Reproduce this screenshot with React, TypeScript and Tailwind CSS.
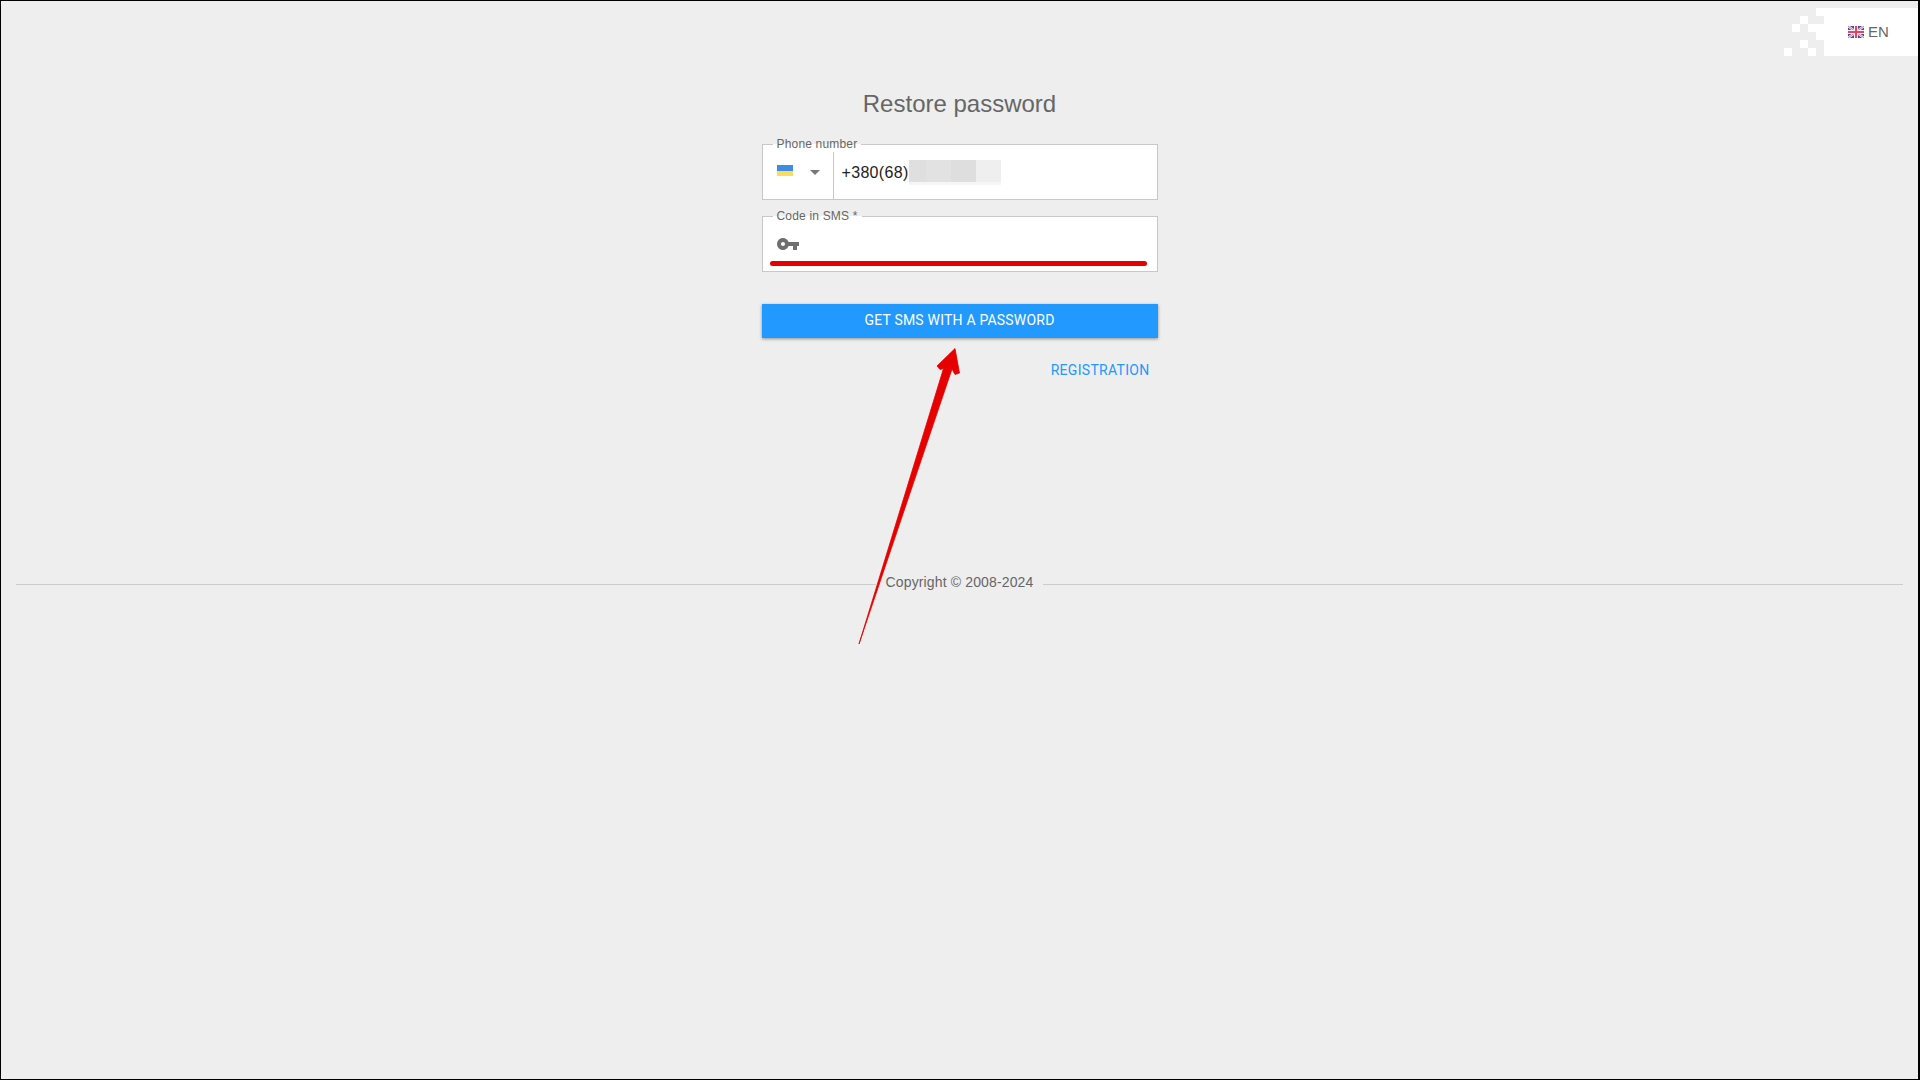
const pixels = [
  [5, 0], [3, 1], [2, 2], [4, 2], [5, 2], [5, 3], [3, 4], [1, 5], [4, 5],
];

function UaFlag() {
  return (
    <div className="mb-[3px] flex h-[11px] w-4 flex-col">
      <div className="h-[5.5px] bg-[#3d8ee0]" />
      <div className="h-[5.5px] bg-[#fddc5c]" />
    </div>
  );
}

function GbFlag() {
  return (
    <svg width="16" height="12" viewBox="0 0 16 12">
      <rect width="16" height="12" fill="#3f4f9f" />
      <path d="M0 0L16 12M16 0L0 12" stroke="#e8e8f0" strokeWidth="2.4" />
      <path d="M0 0L16 12M16 0L0 12" stroke="#e8607a" strokeWidth="0.8" />
      <path d="M8 0V12M0 6H16" stroke="#f4f4f8" strokeWidth="4" />
      <path d="M8 0V12M0 6H16" stroke="#f0405c" strokeWidth="2" />
    </svg>
  );
}

function KeyIcon() {
  return (
    <svg width="24" height="24" viewBox="0 0 24 24" fill="#6f6f6f">
      <path d="M12.65 10C11.83 7.67 9.61 6 7 6c-3.31 0-6 2.69-6 6s2.69 6 6 6c2.61 0 4.83-1.67 5.65-4H17v4h4v-4h2v-4H12.65zM7 14c-1.1 0-2-.9-2-2s.9-2 2-2 2 .9 2 2-.9 2-2 2z" />
    </svg>
  );
}

export default function App() {
  return (
    <div className="relative h-screen overflow-hidden border border-r-2 border-black bg-[#eeeeee] font-['Liberation_Sans',Arial,sans-serif] text-[#666666]">
      {/* language switch */}
      <div className="absolute top-[7px] right-0 flex h-12 w-[94px] items-center bg-white pl-[24px]">
        <GbFlag />
        <span className="ml-[4px] text-[15px] text-[#666666]">EN</span>
      </div>
      <svg className="absolute top-[7px] right-[94px]" width="48" height="48" viewBox="0 0 48 48" fill="#ffffff">
        {pixels.map(([x, y]) => (
          <rect key={`${x}-${y}`} x={x * 8} y={y * 8} width="8" height="8" />
        ))}
      </svg>

      <div className="flex flex-col items-center pt-[87px]">
        <h1 className="text-[24px] leading-[32px] text-[#666666]">Restore password</h1>

        <div className="mt-[24px] w-[396px]">
          {/* phone */}
          <fieldset className="relative flex h-[56px] border border-[#c8c8c8] bg-white">
            <legend className="absolute top-[-9px] left-[10px] bg-[linear-gradient(#eeeeee_50%,#ffffff_50%)] px-1 text-[12px] leading-[16px] tracking-[0.015em] text-[#666666]">
              Phone number
            </legend>
            <div className="flex w-[71px] items-center border-r border-[#c8c8c8] pl-[14px]">
              <UaFlag />
              <div className="ml-[17px] h-0 w-0 border-x-[5px] border-t-[5px] border-x-transparent border-t-[#777777]" />
            </div>
            <div className="flex items-center pl-2 text-[16px] tracking-[0.02em] text-[#222222]">
              <span className="pt-px">+380(68)</span>
              {/* blurred digits */}
              <div className="flex h-[25px] w-[92px] flex-col">
                <div className="flex h-[22px]">
                  <div className="w-[17px] bg-[#dfdfdf]" />
                  <div className="w-[25px] bg-[#e1e2e1]" />
                  <div className="w-[25px] bg-[#dedede]" />
                  <div className="w-[25px] bg-[#efefef]" />
                </div>
                <div className="h-[3px] bg-[#f6f6f6]" />
              </div>
            </div>
          </fieldset>

          {/* sms code */}
          <fieldset className="relative mt-4 flex h-[56px] items-center border border-[#c8c8c8] bg-white pl-[13px]">
            <legend className="absolute top-[-9px] left-[10px] bg-[linear-gradient(#eeeeee_50%,#ffffff_50%)] px-1 text-[12px] leading-[16px] tracking-[0.015em] text-[#666666]">
              Code in SMS *
            </legend>
            <KeyIcon />
            <div className="absolute right-[10px] bottom-[5px] left-[7px] h-[5px] rounded-sm bg-[#e60000]" />
          </fieldset>

          <button className="mt-[32px] h-[34px] w-full bg-[#2199ff] pb-[2px] font-['Roboto',sans-serif] text-[14px] tracking-[0.2px] text-white shadow-[0_1px_3px_rgba(0,0,0,0.4)]">
            GET SMS WITH A PASSWORD
          </button>

          <div className="mt-[23px] flex justify-end pr-2">
            <a className="font-['Roboto',sans-serif] text-[14px] leading-[18px] tracking-[0.3px] text-[#2199ff]">REGISTRATION</a>
          </div>
        </div>
      </div>

      {/* copyright divider */}
      <div className="mx-[15px] mt-[194px] flex items-center gap-[10px] text-[14px] leading-[18px] tracking-[0.01em] text-[#666666]">
        <div className="h-px flex-1 translate-y-[2px] bg-[#cccccc]" />
        <span>Copyright © 2008-2024</span>
        <div className="h-px flex-1 translate-y-[2px] bg-[#cccccc]" />
      </div>

      {/* red arrow annotation */}
      <svg className="absolute top-[339px] left-[840px]" width="140" height="320" viewBox="840 340 140 320">
        <path
          d="M858 644 L942.5 368.5 L939 369.5 L936 366 L954 348.5 L958.5 373 L954 374.5 L951 369 Z"
          fill="#e60000"
          stroke="#e60000"
          strokeWidth="0.8"
          strokeLinejoin="round"
        />
      </svg>
    </div>
  );
}
